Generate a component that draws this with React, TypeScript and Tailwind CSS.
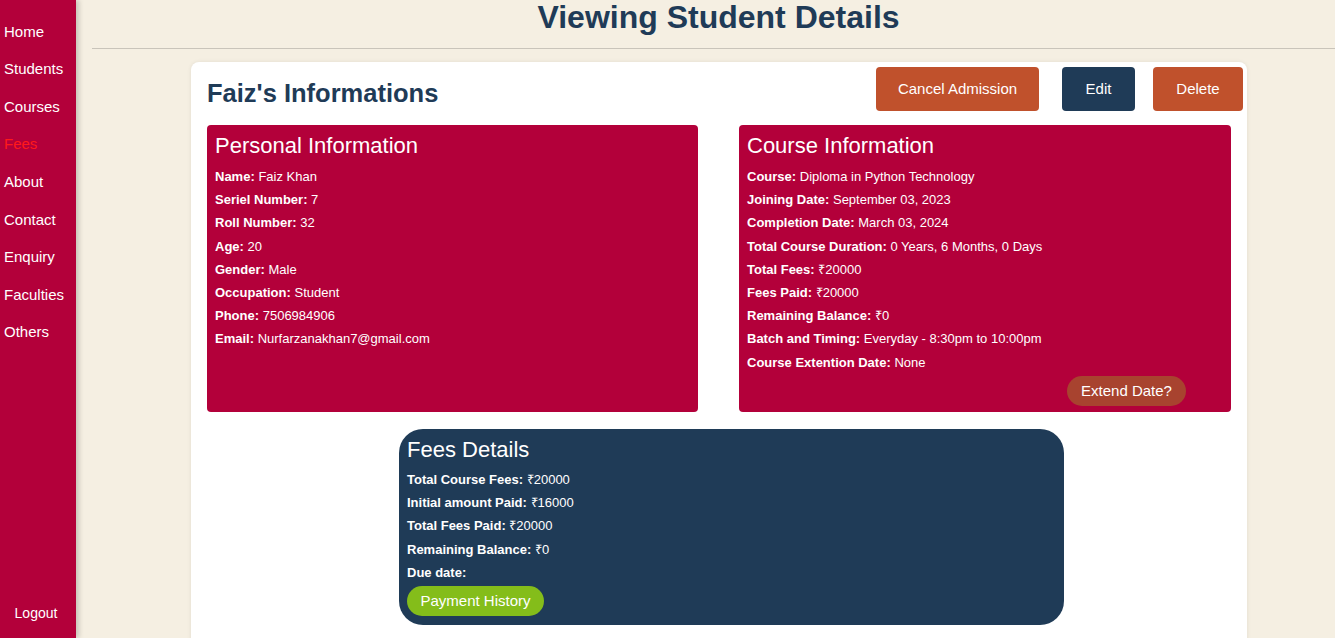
const navLinks = ['Home', 'Students', 'Courses', 'Fees', 'About', 'Contact', 'Enquiry', 'Faculties', 'Others'];

const personal = [
  ['Name:', 'Faiz Khan'],
  ['Seriel Number:', '7'],
  ['Roll Number:', '32'],
  ['Age:', '20'],
  ['Gender:', 'Male'],
  ['Occupation:', 'Student'],
  ['Phone:', '7506984906'],
  ['Email:', 'Nurfarzanakhan7@gmail.com'],
];

const course = [
  ['Course:', 'Diploma in Python Technology'],
  ['Joining Date:', 'September 03, 2023'],
  ['Completion Date:', 'March 03, 2024'],
  ['Total Course Duration:', '0 Years, 6 Months, 0 Days'],
  ['Total Fees:', '₹20000'],
  ['Fees Paid:', '₹20000'],
  ['Remaining Balance:', '₹0'],
  ['Batch and Timing:', 'Everyday - 8:30pm to 10:00pm'],
  ['Course Extention Date:', 'None'],
];

const fees = [
  ['Total Course Fees:', '₹20000'],
  ['Initial amount Paid:', '₹16000'],
  ['Total Fees Paid:', '₹20000'],
  ['Remaining Balance:', '₹0'],
  ['Due date:', ''],
];

const Line = ({ label, value }: { label: string; value: string }) => (
  <p className="text-[13px] leading-[23.2px] text-white">
    <span className="font-bold">{label}</span> {value}
  </p>
);

export default function App() {
  return (
    <div className="flex h-[638px] overflow-hidden bg-[#f5efe2] font-['Liberation_Sans',Arial,sans-serif]">
      {/* sidebar */}
      <aside className="relative z-10 flex w-[76px] shrink-0 flex-col justify-between bg-[#b3003a] shadow-[3px_0_5px_rgba(0,0,0,0.18)]">
        <nav className="flex flex-col pt-[13px]">
          {navLinks.map((l) => (
            <a
              key={l}
              className={`flex h-[37.6px] items-center pl-1 text-[15px] ${l === 'Fees' ? 'text-[#ff1a1a]' : 'text-white'}`}
            >
              {l}
            </a>
          ))}
        </nav>
        <div className="pb-[17px] pr-1 text-center text-[14px] leading-4 text-white">Logout</div>
      </aside>

      {/* main */}
      <main className="flex-1">
        <h1 className="ml-4 pl-[10px] pt-[1px] text-center text-[32px] font-bold leading-[32px] text-[#1f3b57]">
          Viewing Student Details
        </h1>
        <div className="ml-4 mt-[15px] h-px bg-[#c9c4ba]" />

        <section className="ml-[115px] mt-[13px] h-[600px] w-[1056px] rounded-lg bg-white shadow-[0_0_4px_rgba(0,0,0,0.08)]">
          <div className="flex items-start justify-between pl-4 pr-1 pt-[5px]">
            <h2 className="mt-[11px] text-[25.5px] font-bold leading-[30px] text-[#1f3b57]">Faiz's Informations</h2>
            <div className="flex">
              <button className="h-[44px] w-[163px] rounded bg-[#c0512c] text-[15px] text-white">Cancel Admission</button>
              <button className="ml-[23px] h-[44px] w-[73px] rounded bg-[#1f3b57] text-[15px] text-white">Edit</button>
              <button className="ml-[18px] h-[44px] w-[90px] rounded bg-[#c0512c] text-[15px] text-white">Delete</button>
            </div>
          </div>

          <div className="mt-[14px] flex gap-[41px] px-4">
            <div className="h-[287px] w-[491px] rounded bg-[#b3003a] px-2 pt-[8px]">
              <h3 className="mb-[6px] text-[22px] leading-[26px] text-white">Personal Information</h3>
              {personal.map(([a, b]) => (
                <Line key={a} label={a} value={b} />
              ))}
            </div>
            <div className="flex h-[287px] w-[492px] flex-col rounded bg-[#b3003a] px-2 pt-[8px]">
              <h3 className="mb-[6px] text-[22px] leading-[26px] text-white">Course Information</h3>
              {course.map(([a, b]) => (
                <Line key={a} label={a} value={b} />
              ))}
              <button className="mr-[37px] mt-[2px] h-[30px] w-[119px] self-end rounded-full bg-[#a8432f] text-[15px] text-white">
                Extend Date?
              </button>
            </div>
          </div>

          <div className="ml-[208px] mt-[17px] flex h-[196px] w-[665px] flex-col items-start rounded-3xl bg-[#1f3b57] px-2 pt-[8px]">
            <h3 className="mb-[5px] text-[22px] leading-[26px] text-white">Fees Details</h3>
            {fees.map(([a, b]) => (
              <Line key={a} label={a} value={b} />
            ))}
            <button className="mt-[2px] h-[30px] w-[137px] rounded-full bg-[#84bd1a] text-[15px] text-white">
              Payment History
            </button>
          </div>
        </section>
      </main>
    </div>
  );
}
